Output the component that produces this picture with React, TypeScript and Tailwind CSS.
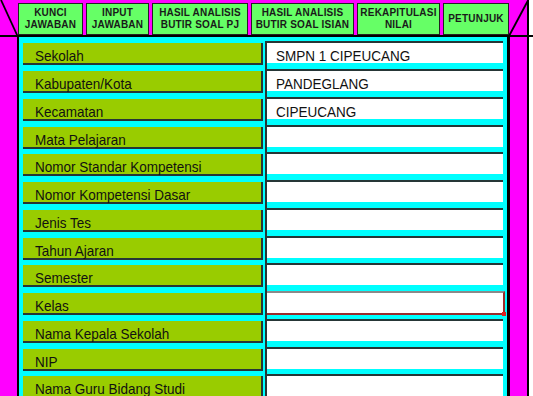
import React from "react";

const MAGENTA = "bg-[#ff00ff]";

interface NavButton {
  lines: string[];
  width: string;
}

const NAV_BUTTONS: NavButton[] = [
  { lines: ["KUNCI", "JAWABAN"], width: "w-[65px]" },
  { lines: ["INPUT", "JAWABAN"], width: "w-[63px]" },
  { lines: ["HASIL ANALISIS", "BUTIR SOAL PJ"], width: "w-[96px]" },
  { lines: ["HASIL ANALISIS", "BUTIR SOAL ISIAN"], width: "w-[103px]" },
  { lines: ["REKAPITULASI", "NILAI"], width: "w-[83px]" },
  { lines: ["PETUNJUK"], width: "w-[66px]" },
];

interface FieldRow {
  label: string;
  value?: string;
  selected?: boolean;
}

const FIELDS: FieldRow[] = [
  { label: "Sekolah", value: "SMPN 1 CIPEUCANG" },
  { label: "Kabupaten/Kota", value: "PANDEGLANG" },
  { label: "Kecamatan", value: "CIPEUCANG" },
  { label: "Mata Pelajaran" },
  { label: "Nomor Standar Kompetensi" },
  { label: "Nomor Kompetensi Dasar" },
  { label: "Jenis Tes" },
  { label: "Tahun Ajaran" },
  { label: "Semester" },
  { label: "Kelas", selected: true },
  { label: "Nama Kepala Sekolah" },
  { label: "NIP" },
  { label: "Nama Guru Bidang Studi" },
];

// excel rows come out at 28/28/28/27 px
const ROW_HEIGHTS = ["h-[28px]", "h-[28px]", "h-[28px]", "h-[27px]"];

const CellText = ({ children }: { children?: string }) => (
  <span className="block origin-left scale-x-[0.9] whitespace-nowrap text-[15px] leading-[15px] text-[#111]">
    {children}
  </span>
);

const Header = () => (
  <div className="flex h-[38px] border-b-2 border-black">
    <div className={`relative w-[18px] ${MAGENTA}`}>
      <svg className="absolute inset-0 overflow-visible" width="18" height="36">
        <line x1="1" y1="0" x2="17.5" y2="36" stroke="#000" strokeWidth="1.8" />
      </svg>
    </div>
    <div className={`flex w-[491px] gap-[3px] pt-[3px] ${MAGENTA}`}>
      {NAV_BUTTONS.map((btn) => (
        <div
          key={btn.lines.join(" ")}
          className={`${btn.width} flex h-[32px] flex-col items-center justify-center border border-[#222] bg-[#66ff66] text-[10px] font-bold leading-[12.5px] tracking-[0.2px] text-[#1a1a1a]`}
        >
          {btn.lines.map((line) => (
            <span key={line} className="whitespace-nowrap">
              {line}
            </span>
          ))}
        </div>
      ))}
    </div>
    <div className={`relative w-[18px] ${MAGENTA}`}>
      <svg className="absolute inset-0 overflow-visible" width="18" height="36">
        <line x1="0" y1="36" x2="19" y2="0.5" stroke="#000" strokeWidth="1.8" />
      </svg>
    </div>
    <div className="w-[2px] bg-black" />
    <div className="flex-1 bg-white" />
  </div>
);

const Row = ({ field, index }: { field: FieldRow; index: number }) => (
  <div className={`flex ${ROW_HEIGHTS[index % 4]}`}>
    <div className="ml-[4px] mt-[2px] h-[22px] w-[240px] border-r-2 border-b-2 border-[#263636] bg-[#99cc00] pl-[12px] pt-[5px]">
      <CellText>{field.label}</CellText>
    </div>
    <div className="ml-[2px] h-full w-[238px] border-l-2 border-[#263636]">
      {field.selected ? (
        <div className="relative h-[24px] w-[238px] border-t-2 border-r-2 border-b-2 border-t-[#8a8a8a] border-r-[#9a2a2a] border-b-[#9a2a2a] bg-white pl-[9px] pt-[5px]">
          <CellText>{field.value}</CellText>
          <div className="absolute -right-[3px] -bottom-[3px] h-[4px] w-[4px] bg-[#e02020]" />
        </div>
      ) : (
        <div className="h-[22px] border-t-2 border-[#263636] bg-white pl-[9px] pt-[5px]">
          <CellText>{field.value}</CellText>
        </div>
      )}
    </div>
  </div>
);

export default function App() {
  return (
    <div className="flex h-[396px] w-[533px] flex-col overflow-hidden bg-white font-['Liberation_Sans',Arial,sans-serif]">
      <Header />
      <div className="flex flex-1">
        <div className={`w-[17px] ${MAGENTA}`} />
        <div className="w-[2px] bg-black" />
        <div className="w-[488px] bg-[#00ffff] pt-[4px]">
          {FIELDS.map((field, i) => (
            <Row key={field.label} field={field} index={i} />
          ))}
        </div>
        <div className="w-[3px] bg-black" />
        <div className={`w-[17px] ${MAGENTA}`} />
        <div className="w-[2px] bg-black" />
        <div className="flex-1 bg-white" />
      </div>
    </div>
  );
}
